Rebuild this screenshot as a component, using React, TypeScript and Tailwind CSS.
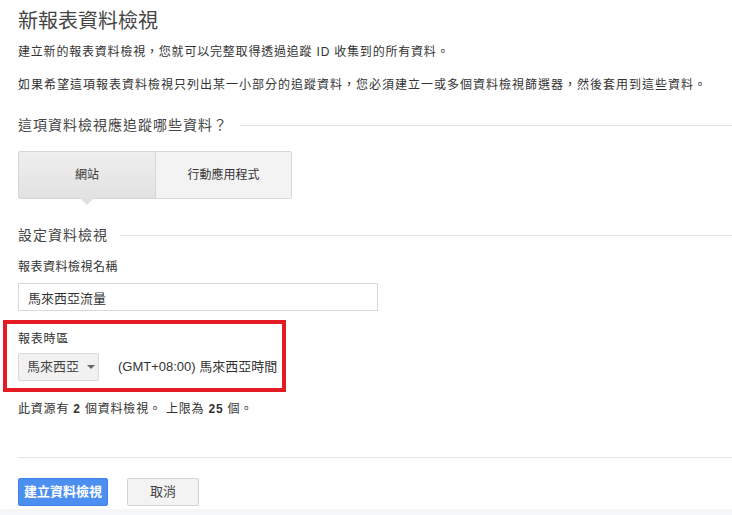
import { useState } from 'react';

const font = { fontFamily: '"Liberation Sans", "Noto Sans CJK TC", sans-serif' };

function SectionHeading({ title, className = '' }: { title: string; className?: string }) {
  return (
    <div className={`flex items-center gap-[12px] ${className}`}>
      <h2 className="text-[14px] leading-[20px] tracking-[1px] text-[#444] whitespace-nowrap">{title}</h2>
      <div className="flex-1 h-px bg-[#e3e3e3]" />
    </div>
  );
}

export default function App() {
  const [platform, setPlatform] = useState<'web' | 'app'>('web');
  const [name, setName] = useState('馬來西亞流量');

  return (
    <div style={font} className="w-[732px] h-[515px] overflow-hidden bg-white text-[#333] flex flex-col">
      <div className="pl-[18px] flex flex-col">
        <h1 className="mt-[7px] text-[20px] leading-[28px] text-[#444] font-normal">新報表資料檢視</h1>
        <p className="mt-[7px] text-[12px] leading-[20px] tracking-[0.8px]">
          建立新的報表資料檢視，您就可以完整取得透過追蹤 ID 收集到的所有資料。
        </p>
        <p className="mt-[13px] text-[12px] leading-[20px] tracking-[1px]">
          如果希望這項報表資料檢視只列出某一小部分的追蹤資料，您必須建立一或多個資料檢視篩選器，然後套用到這些資料。
        </p>

        <SectionHeading title="這項資料檢視應追蹤哪些資料？" className="mt-[20px]" />

        {/* platform tabs */}
        <div className="mt-[16px] flex w-[274px] h-[48px] border border-[#d6d6d6] rounded-[2px]">
          <button
            onClick={() => setPlatform('web')}
            className={`relative w-[137px] h-full text-[12px] border-r border-[#d6d6d6] ${
              platform === 'web' ? 'bg-gradient-to-b from-[#eeeeee] to-[#e2e2e2]' : 'bg-[#f3f3f3]'
            }`}
          >
            網站
            {platform === 'web' && (
              <span className="absolute left-1/2 top-full -translate-x-1/2 w-0 h-0 border-l-[7px] border-r-[7px] border-t-[7px] border-l-transparent border-r-transparent border-t-[#e0e0e0]" />
            )}
          </button>
          <button
            onClick={() => setPlatform('app')}
            className={`relative flex-1 h-full text-[12px] ${
              platform === 'app' ? 'bg-gradient-to-b from-[#eeeeee] to-[#e2e2e2]' : 'bg-[#f3f3f3]'
            }`}
          >
            行動應用程式
            {platform === 'app' && (
              <span className="absolute left-1/2 top-full -translate-x-1/2 w-0 h-0 border-l-[7px] border-r-[7px] border-t-[7px] border-l-transparent border-r-transparent border-t-[#e0e0e0]" />
            )}
          </button>
        </div>

        <SectionHeading title="設定資料檢視" className="mt-[26px]" />

        <label className="mt-[12px] text-[12px] leading-[20px] tracking-[0.5px]">報表資料檢視名稱</label>
        <input
          value={name}
          onChange={(e) => setName(e.target.value)}
          className="mt-[6px] w-[360px] h-[28px] border border-[#d9d9d9] px-[9px] text-[13px] text-[#333] outline-none"
        />

        {/* timezone block (highlighted) */}
        <div className="mt-[9px] -ml-[15px] w-[283px] border-[4px] border-[#e31b23] pl-[11px] pt-[5px] pb-[7px] flex flex-col">
          <span className="text-[12px] leading-[20px] tracking-[0.75px]">報表時區</span>
          <div className="mt-[4px] flex items-center">
            <button className="h-[28px] w-[81px] flex items-center gap-[8px] pl-[8px] bg-[#f1f1f1] border border-[#dadada] rounded-[2px] text-[13px] text-[#444]">
              馬來西亞
              <span className="w-0 h-0 border-l-[4px] border-r-[4px] border-t-[4px] border-l-transparent border-r-transparent border-t-[#666]" />
            </button>
            <span className="ml-[19px] text-[13px] text-[#333]">(GMT+08:00) 馬來西亞時間</span>
          </div>
        </div>

        <p className="mt-[7px] text-[12px] leading-[20px] tracking-[0.8px]">
          此資源有 <b>2</b> 個資料檢視。 上限為 <b>25</b> 個。
        </p>

        <div className="mt-[38px] h-px bg-[#e5e5e5]" />

        <div className="mt-[20px] flex gap-[19px]">
          <button className="h-[28px] w-[90px] bg-[#4d8ff0] border border-[#3f82e8] rounded-[2px] text-white text-[13px] font-bold">
            建立資料檢視
          </button>
          <button className="h-[28px] w-[72px] bg-[#f3f3f3] border border-[#d3d3d3] rounded-[2px] text-[#444] text-[13px]">
            取消
          </button>
        </div>
      </div>
      <div className="mt-[3px] flex-1 bg-[#f5f6f7]" />
    </div>
  );
}
